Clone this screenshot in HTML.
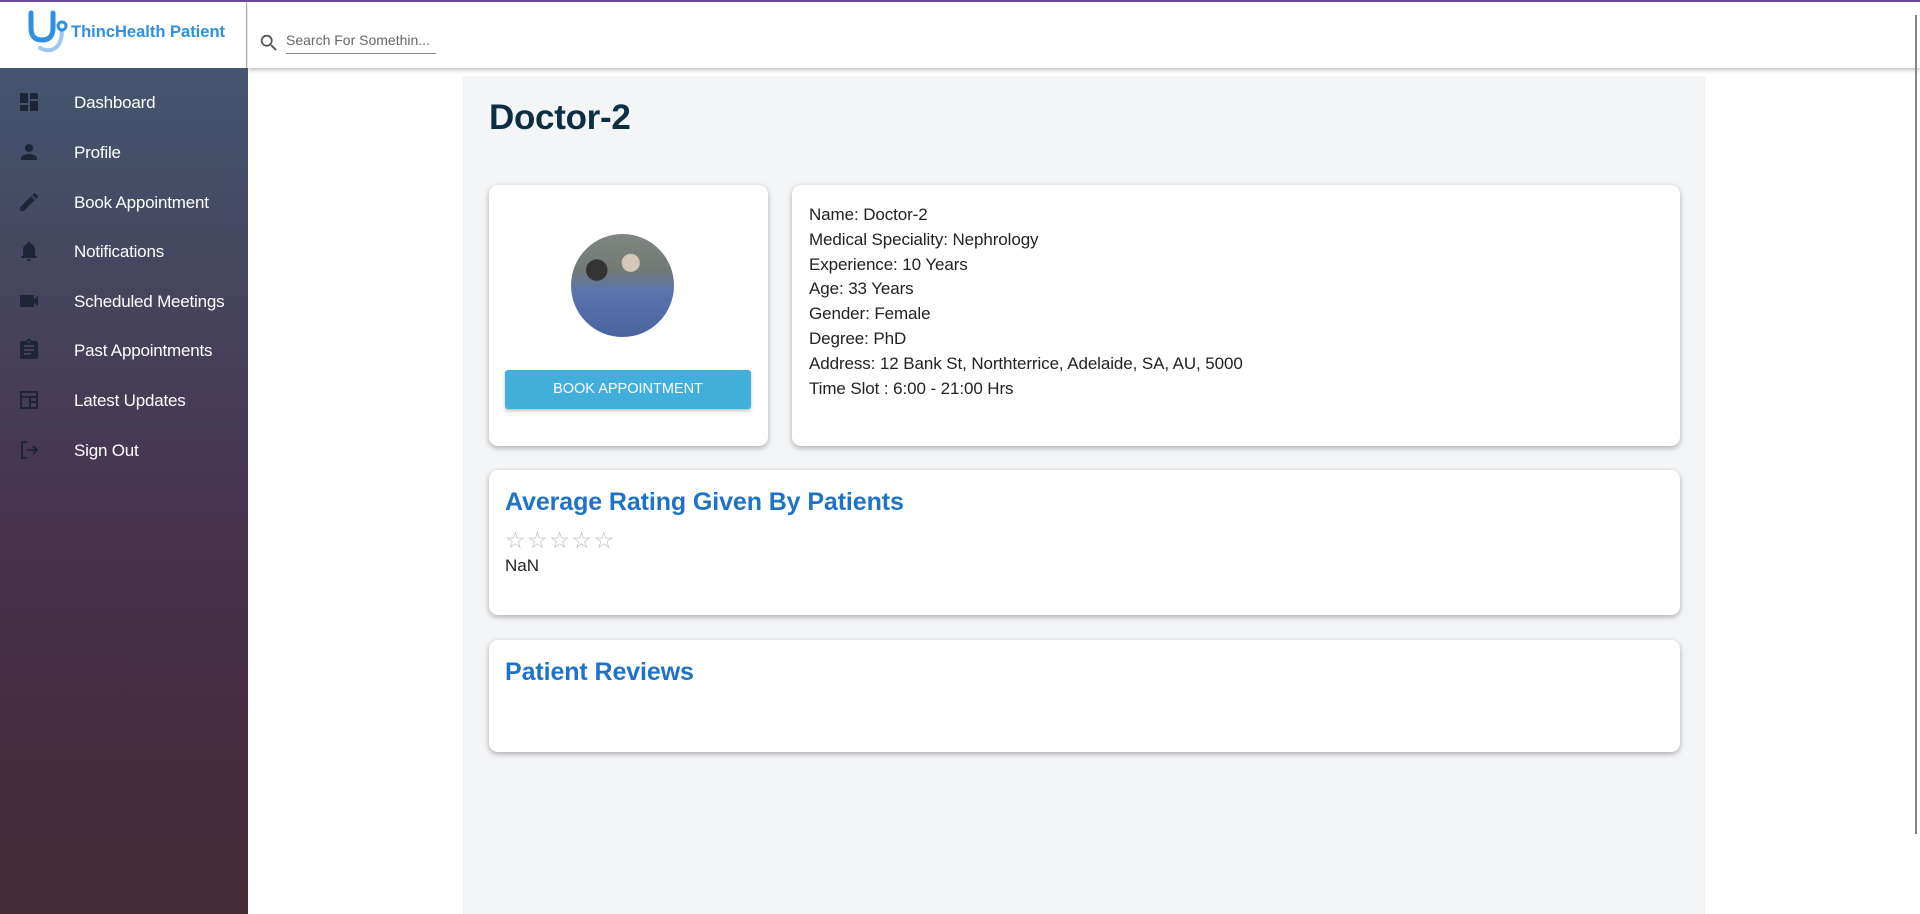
<!DOCTYPE html>
<html><head><meta charset="utf-8">
<style>
*{margin:0;padding:0;box-sizing:border-box}
html,body{width:1920px;height:914px;overflow:hidden;background:#fff;font-family:"Liberation Sans",Arial,sans-serif}
.topline{position:absolute;left:0;top:0;width:1920px;height:2px;background:#6a4a9a}
.logo{position:absolute;left:0;top:2px;width:247px;height:66px;background:#fff;border-right:1px solid #bbb}
.logo span{position:absolute;left:71px;top:21px;font-size:16.5px;font-weight:bold;color:#2f8fe0;letter-spacing:0px}
.header{position:absolute;left:248px;top:2px;width:1672px;height:66px;background:#fff;box-shadow:0 2px 4px rgba(0,0,0,.25)}
.search{position:absolute;left:38px;top:30px;width:150px;border-bottom:1px solid #888;font-size:14px;color:#666;padding-bottom:5px}
.side{position:absolute;left:0;top:68px;width:248px;height:846px;background:linear-gradient(#45556f,#47324c 55%,#452a35)}
.item{position:absolute;left:0;width:248px;height:40px}
.item svg{position:absolute;left:17px;top:8px;width:24px;height:24px;fill:#1e2536}
.item span{position:absolute;left:74px;top:11px;font-size:17px;color:#fff;letter-spacing:-0.2px}
.sep{position:absolute;left:0;top:357px;width:248px;height:1px;background:#3e3f55}
.main{position:absolute;left:463px;top:76px;width:1242px;height:838px;background:#f4f5f7}
h1{position:absolute;left:26px;top:22px;font-size:35px;color:#0c2f42;font-weight:bold;letter-spacing:-0.3px}
.card{position:absolute;background:#fff;border-radius:9px;box-shadow:0 2px 6px rgba(0,0,0,.3)}
.av{position:absolute;left:571px;top:234px;width:103px;height:103px;border-radius:50%;background:radial-gradient(circle at 58% 28%,#d4c8b8 0 9%,transparent 10%),radial-gradient(circle at 25% 35%,#333 0 10%,transparent 11%),linear-gradient(180deg,#7f8580 0%,#727a76 35%,#5b74ac 55%,#4a64a0 100%);overflow:hidden}
.btn{position:absolute;left:505px;top:370px;width:246px;height:39px;background:#42aedc;color:#fff;font-size:14.5px;text-align:center;line-height:39px;border-radius:3px;box-shadow:0 2px 3px rgba(0,0,0,.25)}
.info{position:absolute;left:809px;top:203px;font-size:17px;color:#222;line-height:24.8px;letter-spacing:-0.1px}
.h2{position:absolute;font-size:25px;font-weight:bold;color:#1e73c8;letter-spacing:-0.1px}
.stars{position:absolute;left:505px;top:527px;font-size:23px;color:#bbb;letter-spacing:1.5px}
.scroll{position:absolute;left:1915px;top:15px;width:2px;height:819px;background:#888}
</style></head><body>
<div class="topline"></div>
<div class="logo">
<svg style="position:absolute;left:26px;top:6px" width="48" height="48" viewBox="0 0 48 48">
<path d="M14 40 Q26 46 33 36 Q36 30 36 22" stroke="#9cc8f0" stroke-width="4" fill="none" stroke-linecap="round"/>
<path d="M5 5 V20 Q5 32 16 32 Q27 32 27 20 V5" stroke="#2f8fe0" stroke-width="5" fill="none" stroke-linecap="round"/>
<circle cx="36" cy="18" r="4" stroke="#2f8fe0" stroke-width="3" fill="#fff"/>
</svg>
<span>ThincHealth Patient</span></div>
<div class="header">
<svg style="position:absolute;left:10px;top:30px" width="22" height="22" viewBox="0 0 24 24"><path fill="#555" d="M15.5 14h-.79l-.28-.27A6.470 6.470 0 0 0 16 9.5 6.5 6.5 0 1 0 9.5 16c1.61 0 3.09-.59 4.23-1.57l.27.28v.79l5 4.99L20.49 19l-4.99-5zm-6 0C7.01 14 5 11.990 5 9.5S7.01 5 9.5 5 14 7.01 14 9.5 11.99 14 9.5 14z"/></svg>
<div class="search">Search For Somethin...</div>
</div>
<div class="side">
<div class="item" style="top:14px"><svg viewBox="0 0 24 24"><path d="M3 13h8V3H3v10zm0 8h8v-6H3v6zm10 0h8V11h-8v10zm0-18v6h8V3h-8z"/></svg><span>Dashboard</span></div>
<div class="item" style="top:64px"><svg viewBox="0 0 24 24"><path d="M12 12c2.21 0 4-1.79 4-4s-1.79-4-4-4-4 1.79-4 4 1.79 4 4 4zm0 2c-2.67 0-8 1.34-8 4v2h16v-2c0-2.66-5.33-4-8-4z"/></svg><span>Profile</span></div>
<div class="item" style="top:114px"><svg viewBox="0 0 24 24"><path d="M3 17.25V21h3.75L17.81 9.94l-3.75-3.75L3 17.25zM20.71 7.04a1 1 0 0 0 0-1.41l-2.34-2.34a1 1 0 0 0-1.41 0l-1.83 1.83 3.75 3.75 1.83-1.83z"/></svg><span>Book Appointment</span></div>
<div class="item" style="top:163px"><svg viewBox="0 0 24 24"><path d="M12 22c1.1 0 2-.9 2-2h-4c0 1.1.89 2 2 2zm6-6v-5c0-3.07-1.64-5.64-4.5-6.32V4c0-.83-.67-1.5-1.5-1.5s-1.5.67-1.5 1.5v.68C7.63 5.36 6 7.92 6 11v5l-2 2v1h16v-1l-2-2z"/></svg><span>Notifications</span></div>
<div class="item" style="top:213px"><svg viewBox="0 0 24 24"><path d="M17 10.5V7c0-.55-.45-1-1-1H4c-.55 0-1 .45-1 1v10c0 .55.45 1 1 1h12c.55 0 1-.45 1-1v-3.5l4 4v-11l-4 4z"/></svg><span>Scheduled Meetings</span></div>
<div class="item" style="top:262px"><svg viewBox="0 0 24 24"><path d="M19 3h-4.18C14.4 1.84 13.3 1 12 1s-2.4.84-2.82 2H5c-1.1 0-2 .9-2 2v14c0 1.1.9 2 2 2h14c1.1 0 2-.9 2-2V5c0-1.1-.9-2-2-2zm-7 0c.55 0 1 .45 1 1s-.45 1-1 1-1-.45-1-1 .45-1 1-1zm2 14H7v-2h7v2zm3-4H7v-2h10v2zm0-4H7V7h10v2z"/></svg><span>Past Appointments</span></div>
<div class="item" style="top:312px"><svg viewBox="0 0 24 24"><path d="M3 3v18h18V3H3zm16 2v3H5V5h14zM5 19v-9h7v9H5zm9 0v-4h5v4h-5zm5-6h-5v-3h5v3z"/></svg><span>Latest Updates</span></div>
<div class="sep"></div>
<div class="item" style="top:362px"><svg viewBox="0 0 24 24" style="fill:none;stroke:#1e2536;stroke-width:2"><path d="M10 4H5v16h5M10 12h10M16 8l4 4-4 4"/></svg><span>Sign Out</span></div>
</div>
<div class="main"><h1>Doctor-2</h1></div>
<div class="card" style="left:489px;top:185px;width:279px;height:261px"></div>
<div class="av"></div>
<div class="btn">BOOK APPOINTMENT</div>
<div class="card" style="left:792px;top:185px;width:888px;height:261px"></div>
<div class="info">Name: Doctor-2<br>Medical Speciality: Nephrology<br>Experience: 10 Years<br>Age: 33 Years<br>Gender: Female<br>Degree: PhD<br>Address: 12 Bank St, Northterrice, Adelaide, SA, AU, 5000<br>Time Slot : 6:00 - 21:00 Hrs</div>
<div class="card" style="left:489px;top:470px;width:1191px;height:145px"></div>
<div class="h2" style="left:505px;top:488px">Average Rating Given By Patients</div>
<div class="stars">☆☆☆☆☆</div>
<div style="position:absolute;left:505px;top:556px;font-size:17px;color:#222">NaN</div>
<div class="card" style="left:489px;top:640px;width:1191px;height:112px"></div>
<div class="h2" style="left:505px;top:658px">Patient Reviews</div>
<div class="scroll"></div>
</body></html>
